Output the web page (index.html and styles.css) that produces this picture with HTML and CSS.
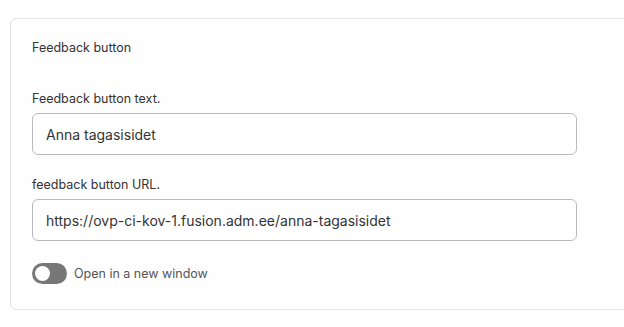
FILE: index.html
```html
<!DOCTYPE html>
<html lang="en">

<head>
    <meta charset="UTF-8">
    <meta name="viewport" content="width=device-width, initial-scale=1.0">
    <title>Feedback button</title>
    <link rel="stylesheet" href="styles.css">
</head>

<body>
    <div class="card">
        <h4 class="cardTitle">Feedback button</h4>

        <div class="field">
            <label class="label" for="btnText">Feedback button text.</label>
            <input class="input" id="btnText" type="text" value="Anna tagasisidet">
        </div>

        <div class="field">
            <label class="label" for="btnUrl">feedback button URL.</label>
            <input class="input" id="btnUrl" type="text" value="https://ovp-ci-kov-1.fusion.adm.ee/anna-tagasisidet">
        </div>

        <label class="toggleRow">
            <span class="toggle"><span class="knob"></span></span>
            <span class="toggleText">Open in a new window</span>
        </label>
    </div>
</body>

</html>
```

FILE: styles.css
```css
*,
*::after,
*::before {
    box-sizing: border-box;
}

body {
    margin: 0;
    background-color: #ffffff;
    font-family: Inter, 'Noto Sans', sans-serif;
    color: #333333;
}

.card {
    margin: 18px -20px 0 10px;
    padding: 22px 0 24px 21px;
    height: 292px;
    border: 1px solid #e3e3e3;
    border-radius: 6px;
    background-color: #fefefe;
}

.cardTitle {
    margin: 0;
    font-size: 12.5px;
    font-weight: 400;
    line-height: 14px;
}

.field {
    margin-top: 37px;
    width: 545px;
}

.field + .field {
    margin-top: 23px;
}

.label {
    display: block;
    font-size: 12.5px;
    line-height: 14px;
    margin-bottom: 7px;
}

.input {
    display: block;
    width: 100%;
    height: 42px;
    padding: 0 13px;
    border: 1px solid #b9b9c1;
    border-radius: 6px;
    background-color: #ffffff;
    font-family: Inter, 'Noto Sans', sans-serif;
    font-size: 14px;
    color: #333333;
}

.toggleRow {
    display: flex;
    align-items: center;
    gap: 7px;
    margin-top: 22px;
}

.toggle {
    display: flex;
    align-items: center;
    width: 35px;
    height: 21px;
    padding: 3px;
    border-radius: 11px;
    background-color: #777777;
}

.knob {
    width: 15px;
    height: 15px;
    border-radius: 50%;
    background-color: #ffffff;
}

.toggleText {
    font-size: 12.5px;
    color: #555555;
}
```
